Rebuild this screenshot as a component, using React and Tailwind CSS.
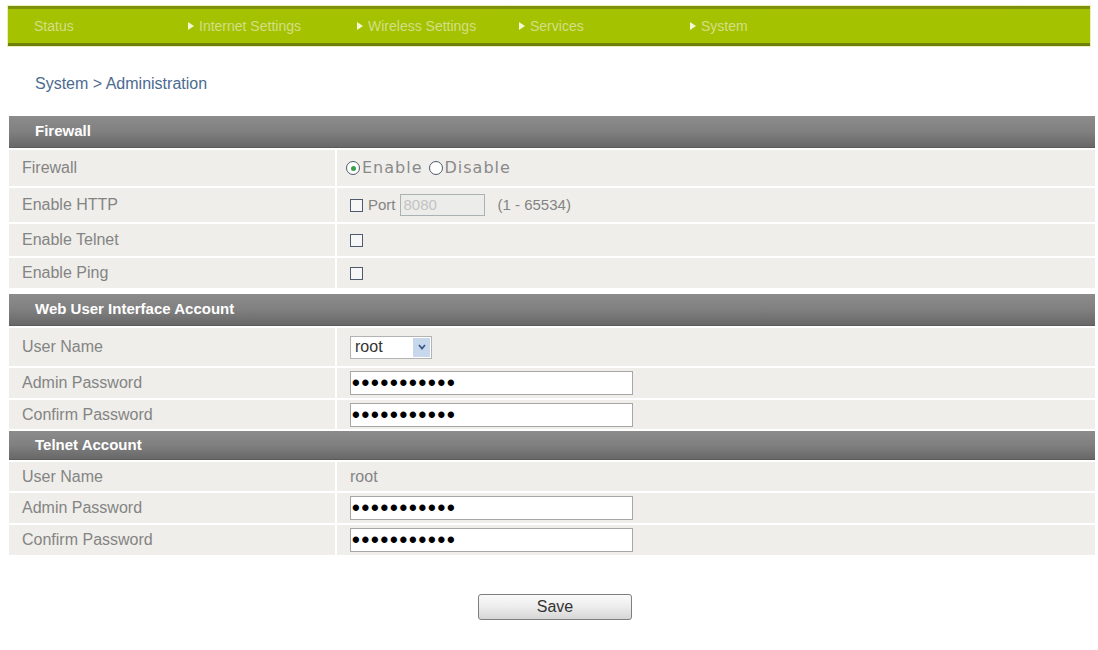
import React, { useState } from "react";

const navItems = [
  { label: "Status", arrow: false, w: "w-[154px]" },
  { label: "Internet Settings", arrow: true, w: "w-[169px]" },
  { label: "Wireless Settings", arrow: true, w: "w-[162px]" },
  { label: "Services", arrow: true, w: "w-[171px]" },
  { label: "System", arrow: true, w: "w-[120px]" },
];

function Arrow() {
  return (
    <svg width="6" height="8" viewBox="0 0 6 8" className="mr-[5px] inline-block">
      <path d="M0 0 L6 4 L0 8 Z" fill="#f4f8d8" />
    </svg>
  );
}

function SectionHeader({ title, h = "h-[32px]" }) {
  return (
    <div className={`${h} flex items-center pl-[26px] bg-gradient-to-b from-[#8c8c8c] via-[#808080] to-[#686868] border-b border-[#5c5c5c] text-white text-[15px] font-bold`}>
      {title}
    </div>
  );
}

function Row({ label, h = "h-[32px]", children }) {
  return (
    <div className={`flex ${h} mt-[2px]`}>
      <div className="w-[326px] bg-[#efeeea] flex items-center pl-[13px] text-[#848484]">
        {label}
      </div>
      <div className="flex-1 ml-[2px] bg-[#efeeea] flex items-center pl-[13px] text-[#848484]">
        {children}
      </div>
    </div>
  );
}

function Check() {
  return <span className="inline-block w-[13px] h-[13px] border-[1.5px] border-[#4d5b6c] bg-[#f7f7f7]" />;
}

function Radio({ on }) {
  return (
    <span className="inline-flex w-[14px] h-[14px] rounded-full border-[1.5px] border-[#4d5b6c] bg-white items-center justify-center mr-[2px]">
      {on && <span className="w-[5px] h-[5px] rounded-full bg-[#3aa14a]" />}
    </span>
  );
}

function Password() {
  return (
    <div className="w-[283px] h-[24px] border border-[#a7a7a7] bg-white flex items-center pl-[1px] text-black text-[22px] font-bold tracking-[1.8px] leading-none">
      •••••••••••
    </div>
  );
}

export default function App() {
  const [fw, setFw] = useState("enable");

  return (
    <div className="w-[1098px] h-[650px] bg-white font-['Liberation_Sans',Arial,sans-serif] text-[16px] pt-[5px]">
      <nav className="mx-[7px] h-[42px] border border-[#e9f0b8] bg-gradient-to-b from-[#7b8d0a] via-[#a5c300] to-[#6a7b08] flex items-center">
        <div className="w-full h-[34px] bg-[#a4c200] flex items-center pl-[26px] text-[14px] text-[#d3df86]">
          {navItems.map((n) => (
            <span key={n.label} className={`${n.w} flex items-center`}>
              {n.arrow && <Arrow />}
              {n.label}
            </span>
          ))}
        </div>
      </nav>

      <div className="pl-[35px] pt-[25px] h-[69px] text-[#4b6b8f] text-[16px]">
        System &gt; Administration
      </div>

      <div className="mx-[9px] w-[1086px]">
        <SectionHeader title="Firewall" />
        <Row label="Firewall" h="h-[36px]">
          <span
            className="flex items-center -ml-[4px] cursor-pointer font-['DejaVu_Sans',sans-serif] text-[16px] tracking-[1px] text-[#8a8a8a]"
            onClick={() => setFw("enable")}
          >
            <Radio on={fw === "enable"} />
            Enable
          </span>
          <span
            className="flex items-center ml-[6px] cursor-pointer font-['DejaVu_Sans',sans-serif] text-[16px] tracking-[1px] text-[#8a8a8a]"
            onClick={() => setFw("disable")}
          >
            <Radio on={fw === "disable"} />
            Disable
          </span>
        </Row>
        <Row label="Enable HTTP" h="h-[34px]">
          <Check />
          <span className="ml-[5px] text-[15px]">Port</span>
          <span className="ml-[4px] w-[85px] h-[22px] border border-[#a9b3b3] bg-[#ececea] flex items-center pl-[3px] text-[15px] text-[#c3c3c3]">
            8080
          </span>
          <span className="ml-[13px] text-[15px]">(1 - 65534)</span>
        </Row>
        <Row label="Enable Telnet">
          <Check />
        </Row>
        <Row label="Enable Ping" h="h-[30px]">
          <Check />
        </Row>

        <div className="mt-[6px]">
          <SectionHeader title="Web User Interface Account" />
        </div>
        <Row label="User Name" h="h-[38px]">
          <span className="w-[82px] h-[23px] border border-[#b3b3b3] bg-white flex items-center justify-between pl-[4px] pr-[1px] text-[#333] text-[16px]">
            root
            <span className="w-[17px] h-[19px] bg-[#c8d8ec] flex items-center justify-center">
              <svg width="8" height="6" viewBox="0 0 8 6">
                <path d="M1 1 L4 4.5 L7 1" fill="none" stroke="#3a5a8a" strokeWidth="1.8" />
              </svg>
            </span>
          </span>
        </Row>
        <Row label="Admin Password" h="h-[30px]">
          <Password />
        </Row>
        <Row label="Confirm Password" h="h-[29px]">
          <Password />
        </Row>

        <div className="mt-[2px]">
          <SectionHeader title="Telnet Account" h="h-[29px]" />
        </div>
        <Row label="User Name" h="h-[29px]">
          root
        </Row>
        <Row label="Admin Password" h="h-[30px]">
          <Password />
        </Row>
        <Row label="Confirm Password" h="h-[30px]">
          <Password />
        </Row>
      </div>

      <div className="flex justify-center pt-[39px] pl-[12px]">
        <button className="w-[154px] h-[26px] rounded-[3px] border border-[#7e7e7e] bg-gradient-to-b from-[#fafafa] via-[#ececec] to-[#d6d6d6] text-[16px] text-[#333]">
          Save
        </button>
      </div>
    </div>
  );
}
